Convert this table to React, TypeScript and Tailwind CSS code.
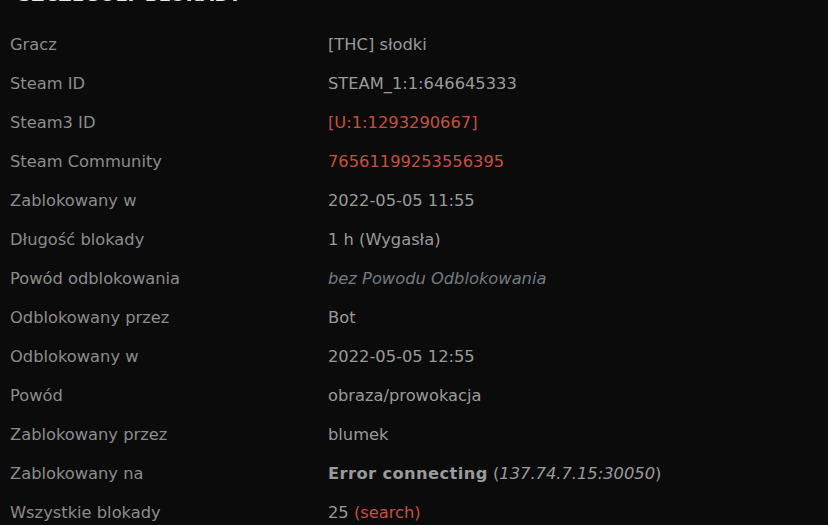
const rows: { label: string; value: React.ReactNode }[] = [
  { label: 'Gracz', value: '[THC] słodki' },
  { label: 'Steam ID', value: 'STEAM_1:1:646645333' },
  { label: 'Steam3 ID', value: <span className="text-[#c4513f]">[U:1:1293290667]</span> },
  { label: 'Steam Community', value: <span className="text-[#c4513f]">76561199253556395</span> },
  { label: 'Zablokowany w', value: '2022-05-05 11:55' },
  { label: 'Długość blokady', value: '1 h (Wygasła)' },
  { label: 'Powód odblokowania', value: <i className="text-[#737a82]">bez Powodu Odblokowania</i> },
  { label: 'Odblokowany przez', value: 'Bot' },
  { label: 'Odblokowany w', value: '2022-05-05 12:55' },
  { label: 'Powód', value: 'obraza/prowokacja' },
  { label: 'Zablokowany przez', value: 'blumek' },
  {
    label: 'Zablokowany na',
    value: (
      <>
        <b className="tracking-[0.4px]">Error connecting</b> (<i>137.74.7.15:30050</i>)
      </>
    ),
  },
  {
    label: 'Wszystkie blokady',
    value: (
      <>
        25 <span className="text-[#c4513f]">(search)</span>
      </>
    ),
  },
];

export default function App() {
  return (
    <div className="h-[525px] w-[828px] overflow-hidden bg-[#0b0b0b] font-['DejaVu_Sans',sans-serif] text-[16.3px]">
      <h2 className="mt-[-16px] pl-[18px] text-[18px] font-bold uppercase tracking-[0.4px] text-[#e6e6e6] leading-[22px]">
        Szczegóły blokady
      </h2>
      <div className="mt-[20px]">
        {rows.map((r) => (
          <div key={r.label} className="flex h-[39px] items-center">
            <div className="w-[328px] pl-[10px] text-[#8c8c8c]">{r.label}</div>
            <div className="text-[#9a9a9a]">{r.value}</div>
          </div>
        ))}
      </div>
    </div>
  );
}
